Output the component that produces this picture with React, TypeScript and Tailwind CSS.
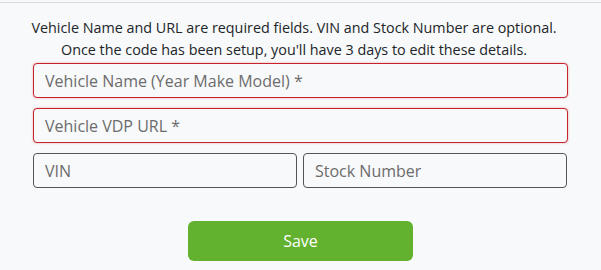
import React from "react";

export default function App() {
  const font = { fontFamily: '"Open Sans", sans-serif' };
  return (
    <div className="w-[601px] h-[270px] bg-[#f8f9fa] pt-[2px]" style={font}>
      <div className="border-t border-[#d9dbe6] px-[33px] pt-[14px]">
        <p className="text-center text-[14.35px] leading-[22px] text-[#212529] whitespace-nowrap -ml-[17px] -mr-[4px]">
          Vehicle Name and URL are required fields. VIN and Stock Number are optional.
          <br />
          Once the code has been setup, you'll have 3 days to edit these details.
        </p>
        <div className="mt-[2px] flex flex-col gap-[10px]">
          <input
            className="h-[35px] w-full rounded-[4px] border border-[#c8232c] bg-[#f8f9fa] px-[11px] text-[16px] text-[#555] placeholder:text-[#6c6c6c] shadow-[0_0_2px_rgba(200,35,44,0.45)] outline-none"
            placeholder="Vehicle Name (Year Make Model) *"
          />
          <input
            className="h-[35px] w-full rounded-[4px] border border-[#c8232c] bg-[#f8f9fa] px-[11px] text-[16px] text-[#555] placeholder:text-[#6c6c6c] shadow-[0_0_2px_rgba(200,35,44,0.45)] outline-none"
            placeholder="Vehicle VDP URL *"
          />
          <div className="flex gap-[6px]">
            <input
              className="h-[35px] w-[264px] rounded-[4px] border border-[#555] bg-[#f8f9fa] px-[11px] text-[16px] text-[#555] placeholder:text-[#6c6c6c] outline-none"
              placeholder="VIN"
            />
            <input
              className="h-[35px] w-[264px] rounded-[4px] border border-[#555] bg-[#f8f9fa] px-[11px] text-[16px] text-[#555] placeholder:text-[#6c6c6c] outline-none"
              placeholder="Stock Number"
            />
          </div>
        </div>
        <div className="mt-[33px] flex justify-center">
          <button className="h-[40px] w-[225px] rounded-[6px] bg-[#62b22f] text-[16px] text-white">
            Save
          </button>
        </div>
      </div>
    </div>
  );
}
